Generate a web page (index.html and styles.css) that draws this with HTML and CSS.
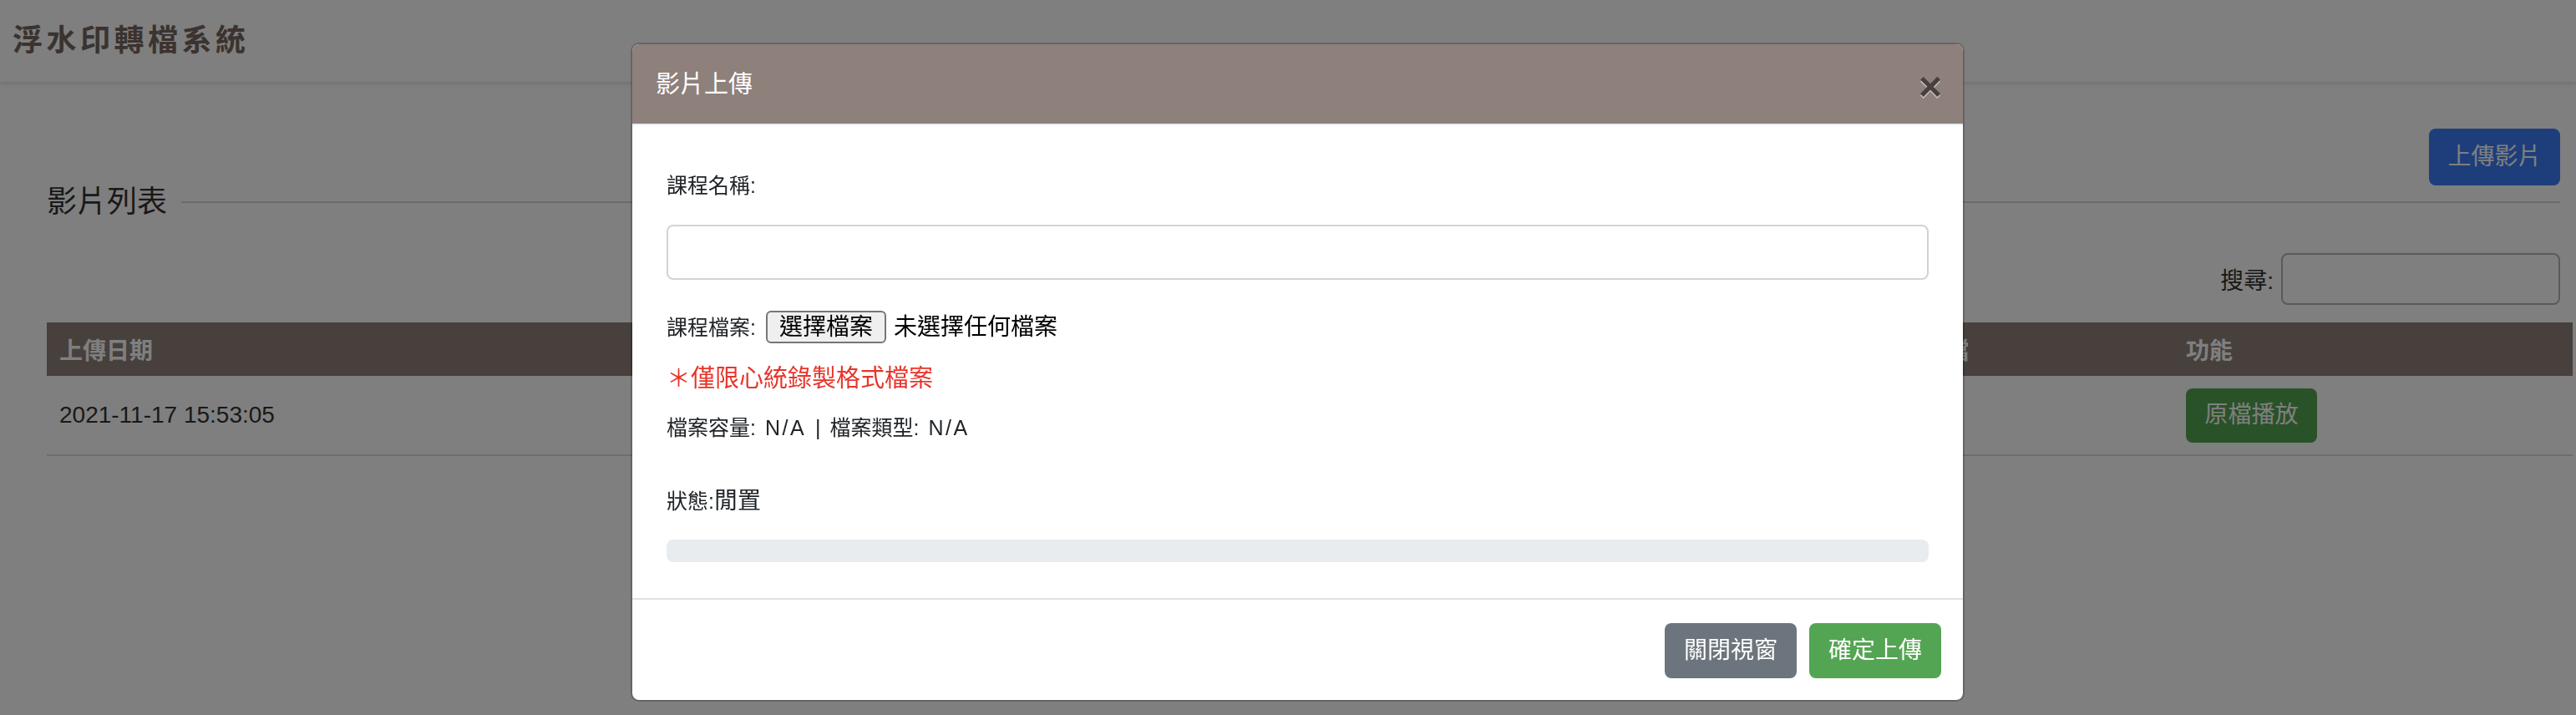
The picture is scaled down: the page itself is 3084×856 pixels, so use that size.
FILE: index.html
```html
<!DOCTYPE html>
<html lang="zh-Hant">
<head>
<meta charset="utf-8">
<title>浮水印轉檔系統</title>
<link rel="stylesheet" href="styles.css">
</head>
<body>
<header class="topbar">
  <h1 class="brand">浮水印轉檔系統</h1>
</header>
<main class="content">
  <div class="toolbar">
    <button class="btn btn-primary">上傳影片</button>
  </div>
  <div class="section-head">
    <h2 class="section-title">影片列表</h2>
    <div class="section-rule"></div>
  </div>
  <div class="search-row">
    <label class="search-label">搜尋:</label>
    <input class="search-input" type="text">
  </div>
  <table class="list">
    <colgroup>
      <col class="c-date"><col class="c-name"><col class="c-src"><col class="c-out"><col class="c-act">
    </colgroup>
    <thead>
      <tr><th>上傳日期</th><th>課程名稱</th><th>原始檔案</th><th>浮水印檔</th><th>功能</th></tr>
    </thead>
    <tbody>
      <tr>
        <td>2021-11-17 15:53:05</td>
        <td></td>
        <td></td>
        <td></td>
        <td><button class="btn btn-play">原檔播放</button></td>
      </tr>
    </tbody>
  </table>
</main>

<div class="backdrop"></div>
<div class="modal">
  <div class="modal-header">
    <h5 class="modal-title">影片上傳</h5>
    <button class="close">×</button>
  </div>
  <div class="modal-body">
    <div class="label">課程名稱:</div>
    <input class="text-input" type="text">
    <div class="file-row">
      <span class="label">課程檔案:</span>
      <button class="file-btn">選擇檔案</button>
      <span class="file-name">未選擇任何檔案</span>
    </div>
    <div class="warn">＊僅限心統錄製格式檔案</div>
    <div class="info">檔案容量: <span class="val">N/A</span> | 檔案類型: <span class="val">N/A</span></div>
    <div class="status"><span class="status-label">狀態:</span><span class="status-value">閒置</span></div>
    <div class="progress"></div>
  </div>
  <div class="modal-footer">
    <button class="btn btn-secondary">關閉視窗</button>
    <button class="btn btn-success">確定上傳</button>
  </div>
</div>
</body>
</html>
```

FILE: styles.css
```css
* { box-sizing: border-box; }
html, body { margin: 0; padding: 0; }
body {
  width: 3084px;
  height: 856px;
  overflow: hidden;
  background: #fff;
  font-family: "Liberation Sans", "Noto Sans CJK TC", sans-serif;
  color: #333;
  position: relative;
}

/* top bar */
.topbar {
  height: 98px;
  display: flex;
  align-items: center;
  padding-left: 15px;
  background: #fff;
  box-shadow: 0 2px 6px rgba(0, 0, 0, 0.14);
  position: relative;
}
.brand {
  margin: 0;
  font-size: 36px;
  line-height: 40px;
  font-weight: 700;
  letter-spacing: 4.5px;
  color: #76665e;
}

/* content */
.content { padding: 0 19px 0 56px; }
.toolbar {
  display: flex;
  justify-content: flex-end;
  margin-top: 56px;
}
.btn {
  border: none;
  border-radius: 8px;
  color: #fff;
  font-family: inherit;
  font-size: 28px;
  line-height: 1;
  display: inline-flex;
  align-items: center;
  justify-content: center;
  padding: 0;
}
.btn-primary { width: 157px; height: 68px; background: #3a7cf6; }

.section-head {
  display: flex;
  align-items: center;
  height: 40px;
  gap: 17px;
}
.section-title {
  margin: 0;
  font-size: 36px;
  line-height: 40px;
  font-weight: 400;
  color: #333;
}
.section-rule { flex: 1; height: 2px; background: #d4d4d4; }

.search-row {
  display: flex;
  justify-content: flex-end;
  align-items: center;
  gap: 9px;
  margin-top: 41px;
  font-size: 28px;
  color: #333;
}
.search-input {
  width: 334px;
  height: 62px;
  border: 2px solid #b4b4b4;
  border-radius: 8px;
  background: #fff;
}

/* table */
.list {
  margin-top: 21px;
  width: 3024px;
  border-collapse: collapse;
  table-layout: fixed;
  font-size: 28px;
}
.c-date { width: 844px; }
.c-name { width: 700px; }
.c-src { width: 630px; }
.c-out { width: 372px; }
.c-act { width: 478px; }
.list th {
  height: 64px;
  padding: 0 15px;
  background: #8e807b;
  color: #fff;
  text-align: left;
  font-weight: 700;
  white-space: nowrap;
}
.list td {
  height: 95px;
  padding: 0 15px;
  border-bottom: 2px solid #d8dadc;
  color: #333;
  white-space: nowrap;
}
.btn-play { width: 157px; height: 65px; background: #54a553; }

/* modal */
.backdrop {
  position: fixed;
  inset: 0;
  background: rgba(0, 0, 0, 0.5);
}
.modal {
  position: absolute;
  left: 755px;
  top: 51px;
  width: 1597px;
  height: 789px;
  background: #fff;
  background-clip: padding-box;
  border: 2px solid rgba(0, 0, 0, 0.2);
  border-radius: 10px;
  overflow: hidden;
  display: flex;
  flex-direction: column;
  color: #212529;
}
.modal-header {
  height: 97px;
  flex: none;
  display: flex;
  align-items: center;
  justify-content: space-between;
  padding: 0 25px 0 28px;
  background: #8e807b;
  border-bottom: 2px solid #e9ecef;
}
.modal-title {
  margin: 0;
  font-size: 29px;
  line-height: 40px;
  font-weight: 400;
  color: #fff;
}
.close {
  border: none;
  background: transparent;
  padding: 0;
  font-family: "Liberation Sans", sans-serif;
  font-size: 48px;
  line-height: 48px;
  font-weight: 700;
  color: #000;
  opacity: 0.5;
  text-shadow: 0 2px 0 #fff;
  margin-top: 6px;
}
.modal-body {
  flex: none;
  height: 566px;
  padding: 54px 41px 0 41px;
}
.label {
  font-size: 25px;
  line-height: 36px;
}
.text-input {
  display: block;
  width: 100%;
  height: 66px;
  margin-top: 29px;
  border: 2px solid #ced4da;
  border-radius: 8px;
  background: #fff;
}
.file-row {
  display: flex;
  align-items: center;
  height: 39px;
  margin-top: 37px;
}
.file-btn {
  height: 39px;
  margin-left: 12px;
  padding: 0 14px;
  border: 2px solid #767676;
  border-radius: 6px;
  background: #efefef;
  font-family: inherit;
  font-size: 28px;
  line-height: 1;
  color: #000;
}
.file-name {
  margin-left: 9px;
  font-size: 28px;
  line-height: 39px;
  color: #000;
}
.warn {
  margin-top: 22px;
  font-size: 29px;
  line-height: 40px;
  color: #e8342a;
}
.info {
  margin-top: 21px;
  font-size: 25px;
  line-height: 36px;
  word-spacing: 4px;
}
.val { letter-spacing: 2.5px; }
.status {
  margin-top: 50px;
  height: 40px;
  line-height: 40px;
}
.status-label { font-size: 25px; }
.status-value { font-size: 28px; }
.progress {
  margin-top: 26px;
  height: 27px;
  border-radius: 8px;
  background: #e9ecef;
}
.modal-footer {
  flex: 1;
  display: flex;
  justify-content: flex-end;
  gap: 15px;
  padding: 28px 26px 0 0;
  border-top: 2px solid #dee2e6;
}
.btn-secondary { width: 158px; height: 66px; background: #6c757d; }
.btn-success { width: 158px; height: 66px; background: #54a553; }
```
